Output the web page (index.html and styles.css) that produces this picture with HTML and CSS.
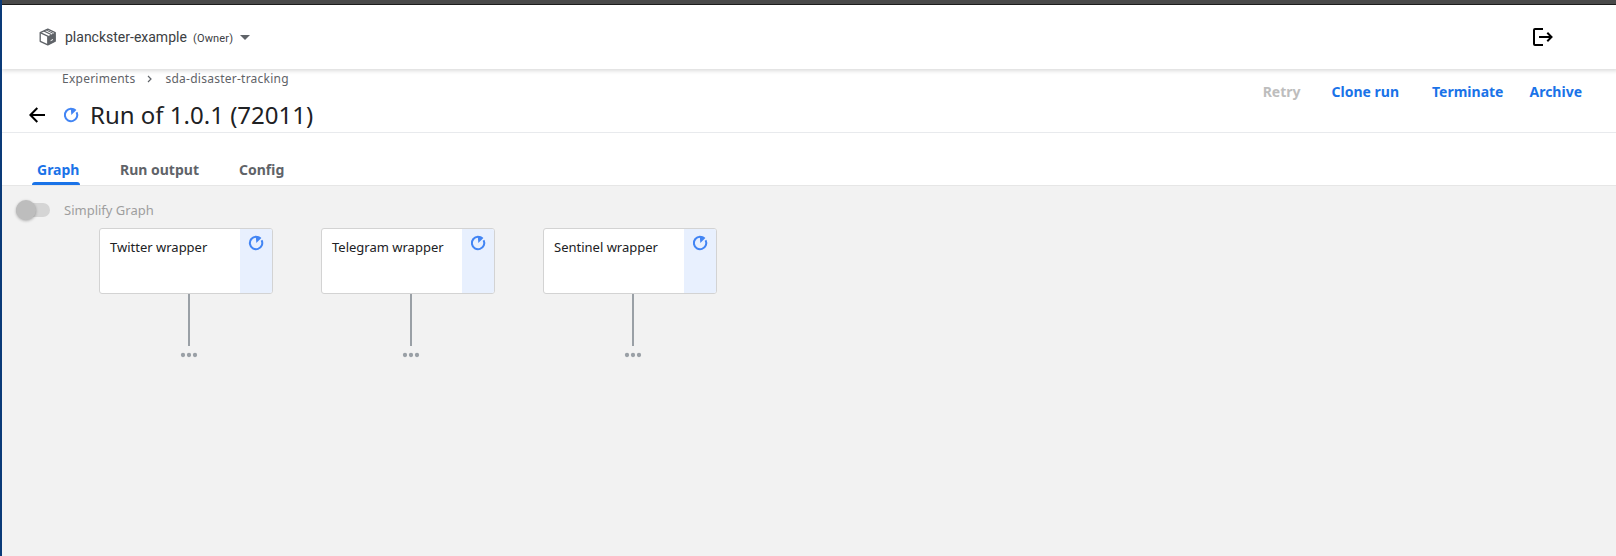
FILE: index.html
```
<!DOCTYPE html>
<html lang="en">
<head>
<meta charset="utf-8">
<title>Run of 1.0.1 (72011)</title>
<link rel="stylesheet" href="styles.css">
</head>
<body>
<svg class="defs" width="0" height="0">
  <symbol id="running" viewBox="0 0 16 16">
    <path d="M13.6 5.2A6.2 6.2 0 1 1 8 1.8" fill="none" stroke="#4285f4" stroke-width="2"/>
    <path d="M7.8.8c2.2 0 4.2.7 5.6 2.1L8.3 8z" fill="#4285f4"/>
  </symbol>
  <symbol id="more" viewBox="0 0 18 6">
    <circle cx="3" cy="3" r="2.15" fill="#9aa0a6"/>
    <circle cx="9" cy="3" r="2.15" fill="#9aa0a6"/>
    <circle cx="15" cy="3" r="2.15" fill="#9aa0a6"/>
  </symbol>
</svg>
<div class="app">
  <header class="topbar">
    <div class="namespace">
      <svg class="cube" width="18" height="18" viewBox="0 0 18 18">
        <path d="M8.8 1.2 16.2 4.6v8.6L8.8 16.9 1.2 13.3V4.6z" fill="#fff" stroke="#5f6368" stroke-width="1.3" stroke-linejoin="round"/>
        <path d="M8.8 8.2 16.4 4.6v8.6L8.8 16.9z" fill="#5f6368"/>
        <path d="M1.2 4.6 8.8 8.2v8.5M4.8 3l7.3 3.5" fill="none" stroke="#5f6368" stroke-width="1.3"/>
        <path d="M7.2 2l7 3.4" fill="none" stroke="#5f6368" stroke-width="1"/>
        <path d="M11.6 12.7l2.4-1.2" stroke="#fff" stroke-width="1"/>
      </svg>
      <span class="ns-name">planckster-example</span>
      <span class="ns-role">(Owner)</span>
      <span class="caret"></span>
    </div>
    <svg class="logout" width="20" height="18" viewBox="0 0 20 18">
      <path d="M10 1H2a1 1 0 0 0-1 1v14a1 1 0 0 0 1 1h8M6 9h12M14.3 4.8 18.5 9l-4.2 4.2" fill="none" stroke="#000" stroke-width="2"/>
    </svg>
  </header>
  <section class="heading">
    <div class="heading-left">
      <nav class="crumbs">
        <span>Experiments</span>
        <svg width="5" height="8" viewBox="0 0 5 8"><path d="M1 1l3 3-3 3" fill="none" stroke="#5f6368" stroke-width="1.2"/></svg>
        <span>sda-disaster-tracking</span>
      </nav>
      <div class="title-row">
        <svg class="back" width="16" height="16" viewBox="0 0 16 16"><path d="M16 8H1.8M8.3 1 1.4 8l6.9 7" fill="none" stroke="#000" stroke-width="2"/></svg>
        <svg class="status" width="16" height="16"><use href="#running"/></svg>
        <h1>Run of 1.0.1 (72011)</h1>
      </div>
    </div>
    <div class="actions">
      <span class="retry">Retry</span>
      <span class="clone">Clone run</span>
      <span class="terminate">Terminate</span>
      <span class="archive">Archive</span>
    </div>
  </section>
  <nav class="tabs">
    <span class="tab active">Graph</span>
    <span class="tab output">Run output</span>
    <span class="tab config">Config</span>
  </nav>
  <main class="graph">
    <div class="simplify">
      <span class="switch"><span class="knob"></span></span>
      <span>Simplify Graph</span>
    </div>
    <div class="nodes">
      <div class="node">
        <div class="card"><span class="label">Twitter wrapper</span><span class="state"><svg width="16" height="16"><use href="#running"/></svg></span></div>
        <div class="edge"></div>
        <svg class="dots" width="18" height="6"><use href="#more"/></svg>
      </div>
      <div class="node">
        <div class="card"><span class="label">Telegram wrapper</span><span class="state"><svg width="16" height="16"><use href="#running"/></svg></span></div>
        <div class="edge"></div>
        <svg class="dots" width="18" height="6"><use href="#more"/></svg>
      </div>
      <div class="node">
        <div class="card"><span class="label">Sentinel wrapper</span><span class="state"><svg width="16" height="16"><use href="#running"/></svg></span></div>
        <div class="edge"></div>
        <svg class="dots" width="18" height="6"><use href="#more"/></svg>
      </div>
    </div>
  </main>
</div>
</body>
</html>
```
FILE: styles.css
```
* { box-sizing: border-box; }
body { margin: 0; font-family: "Noto Sans", sans-serif; color: #202124; background: #fff; }
svg { display: block; flex: none; }
.defs { position: absolute; }
.app {
  height: 556px;
  border-left: 2px solid #0a3a78;
  display: flex;
  flex-direction: column;
  overflow: hidden;
}
.topbar {
  position: relative;
  flex: none;
  height: 69px;
  margin-left: -2px;
  border-top: 4px solid #4a4a4a;
  box-shadow: inset 0 1px #1c1c1c, inset 2px 0 #0a3a78, 2px 2px 4px rgba(0, 0, 0, .14);
  background: #fff;
  display: flex;
  justify-content: space-between;
  padding: 0 63px 0 39px;
}
.namespace { display: flex; align-items: center; height: 66px; font-family: Roboto, sans-serif; color: #3c4043; }
.ns-name { font-size: 14px; margin-left: 8px; width: 122px; white-space: nowrap; }
.ns-role { font-size: 11px; letter-spacing: .15px; margin-left: 6px; width: 40px; padding-top: 2px; }
.caret { margin-left: 7px; border: 5px solid transparent; border-top-color: #5f6368; border-bottom: 0; }
.logout { margin-top: 24px; }
.heading { flex: none; height: 64px; border-bottom: 1px solid #e8eaed; display: flex; justify-content: space-between; }
.crumbs { display: flex; align-items: center; height: 19px; padding-left: 60px; font-size: 12px; letter-spacing: .25px; color: #5f6368; }
.crumbs svg { margin: 0 13px 0 12px; }
.title-row { display: flex; align-items: center; height: 54px; padding-left: 27px; }
.status { margin-left: 18px; }
h1 { margin: 0 0 0 11px; font-size: 24px; line-height: 34px; font-weight: 400; white-space: nowrap; }
.actions { display: flex; padding: 13px 34px 0 0; font-size: 14px; line-height: 19px; font-weight: 700; color: #1a73e8; }
.retry { color: #bdbdbd; margin-right: 31px; }
.clone { margin-right: 33px; }
.terminate { margin-right: 26px; }
.tabs { flex: none; height: 53px; border-bottom: 1px solid #e6e6e6; display: flex; align-items: flex-end; padding-left: 31px; font-size: 14px; font-weight: 700; line-height: 19px; color: #5f6368; }
.tab { height: 25px; }
.active { position: relative; color: #1a73e8; width: 47px; padding-left: 4px; }
.active::after { content: ""; position: absolute; left: -1px; right: 0; bottom: 0; height: 3px; border-radius: 3px 3px 0 0; background: #1a73e8; }
.output { margin-left: 40px; width: 80px; white-space: nowrap; }
.config { margin-left: 39px; }
.graph { flex: 1; background: #f2f2f2; }
.simplify { display: flex; align-items: center; height: 42px; padding: 6px 0 0 14px; font-size: 13px; color: #9e9e9e; }
.switch { width: 34px; height: 14px; border-radius: 7px; background: #d5d5d5; margin-right: 14px; display: flex; align-items: center; }
.knob { flex: none; width: 20px; height: 20px; border-radius: 50%; background: #bdbdbd; box-shadow: 0 1px 3px rgba(0, 0, 0, .3); }
.nodes { display: flex; gap: 48px; padding-left: 97px; }
.node { width: 174px; }
.card { height: 66px; border: 1px solid #d3d3d3; border-radius: 3px; background: #fff; display: flex; overflow: hidden; }
.label { flex: 1; padding: 9px 0 0 10px; font-size: 13px; line-height: 18px; white-space: nowrap; }
.state { width: 32px; background: #e8f0fe; padding: 6px 0 0 8px; }
.edge { width: 2px; height: 52px; margin-left: 89px; background: #9aa0a6; }
.dots { margin: 6px 0 0 81px; }
```
